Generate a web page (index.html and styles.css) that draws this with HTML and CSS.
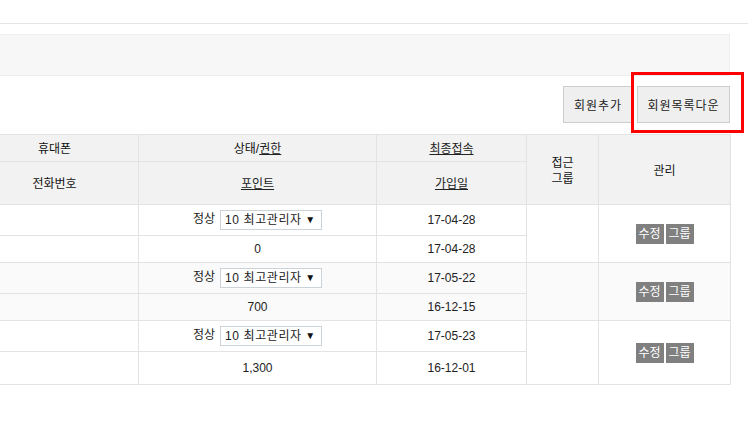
FILE: index.html
```html
<!DOCTYPE html>
<html lang="ko">
<head>
    <meta charset="UTF-8">
    <title>회원관리</title>
    <link rel="stylesheet" href="styles.css">
</head>
<body>
    <div class="top-bar"></div>
    <div class="container">
        <div class="search-box"></div>

        <div class="btn-row">
            <a href="#" class="btn btn-add">회원추가</a>
            <a href="#" class="btn btn-down">회원목록다운</a>
        </div>

        <table class="member-table">
            <colgroup>
                <col class="c1"><col class="c2"><col class="c3"><col class="c4"><col class="c5">
            </colgroup>
            <thead>
                <tr class="h1">
                    <th>휴대폰</th>
                    <th>상태/<a href="#">권한</a></th>
                    <th><a href="#">최종접속</a></th>
                    <th rowspan="2">접근<br>그룹</th>
                    <th rowspan="2">관리</th>
                </tr>
                <tr class="h2">
                    <th>전화번호</th>
                    <th><a href="#">포인트</a></th>
                    <th><a href="#">가입일</a></th>
                </tr>
            </thead>
            <tbody>
                <tr class="r1">
                    <td></td>
                    <td class="level">정상<span class="select">10 최고관리자<span class="arrow">▼</span></span></td>
                    <td>17-04-28</td>
                    <td rowspan="2"></td>
                    <td rowspan="2"><div class="manage"><span class="mini-btn">수정</span><span class="mini-btn">그룹</span></div></td>
                </tr>
                <tr class="r2">
                    <td></td>
                    <td>0</td>
                    <td>17-04-28</td>
                </tr>
                <tr class="r1 alt">
                    <td></td>
                    <td class="level">정상<span class="select">10 최고관리자<span class="arrow">▼</span></span></td>
                    <td>17-05-22</td>
                    <td rowspan="2"></td>
                    <td rowspan="2"><div class="manage"><span class="mini-btn">수정</span><span class="mini-btn">그룹</span></div></td>
                </tr>
                <tr class="r2 alt">
                    <td></td>
                    <td>700</td>
                    <td>16-12-15</td>
                </tr>
                <tr class="r1">
                    <td></td>
                    <td class="level">정상<span class="select">10 최고관리자<span class="arrow">▼</span></span></td>
                    <td>17-05-23</td>
                    <td rowspan="2"></td>
                    <td rowspan="2"><div class="manage"><span class="mini-btn">수정</span><span class="mini-btn">그룹</span></div></td>
                </tr>
                <tr class="r2 last">
                    <td></td>
                    <td>1,300</td>
                    <td>16-12-01</td>
                </tr>
            </tbody>
        </table>
    </div>
</body>
</html>
```

FILE: styles.css
```css
/* General */
body {
    margin: 0;
    font-family: "Liberation Sans", "Noto Sans CJK KR", sans-serif;
    font-size: 12px;
    color: #222;
    background: #fff;
    overflow: hidden;
}

a {
    color: #222;
}

.top-bar {
    height: 23px;
    border-bottom: 1px solid #e5e5e5;
}

.container {
    width: 760px;
    margin-left: -30px;
}

.search-box {
    margin-top: 10px;
    height: 40px;
    background: #f7f7f7;
    border: 1px solid #eee;
}

/* Buttons */
.btn-row {
    display: flex;
    justify-content: flex-end;
    gap: 4px;
    margin-top: 10px;
    height: 37px;
}

.btn {
    display: flex;
    align-items: center;
    justify-content: center;
    box-sizing: border-box;
    background: #efefef;
    border: 1px solid #ccc;
    color: #222;
    text-decoration: none;
    letter-spacing: 1px;
    position: relative;
}

.btn-add { width: 70px; }
.btn-down { width: 93px; }

.btn-down::after {
    content: "";
    position: absolute;
    left: -7px;
    top: -15px;
    right: -15px;
    bottom: -11px;
    border: 3px solid #f00;
}

/* Table */
.member-table {
    margin-top: 11px;
    width: 100%;
    border-collapse: collapse;
    table-layout: fixed;
}

.c1 { width: 168px; }
.c2 { width: 238px; }
.c3 { width: 150px; }
.c4 { width: 72px; }
.c5 { width: 132px; }

.member-table th,
.member-table td {
    border: 1px solid #e3e3e3;
    padding: 0;
    text-align: center;
    line-height: 16px;
}

.member-table th {
    background: #f2f2f2;
    font-weight: normal;
    color: #111;
    padding-top: 2px;
}

.h1 th { height: 24px; }
.h2 th { height: 40px; }

.r1 td { height: 30px; }
.r2 td { height: 26px; }
.last td { height: 32px; }

.alt td { background: #fafafa; }

.select {
    display: inline-block;
    box-sizing: border-box;
    width: 102px;
    height: 20px;
    line-height: 18px;
    padding-left: 4px;
    margin-left: 5px;
    border: 1px solid #ccd3d8;
    background: #fff;
    text-align: left;
    vertical-align: middle;
    position: relative;
    letter-spacing: 0.6px;
}

.arrow {
    position: absolute;
    right: 6px;
    top: 0;
    font-size: 10px;
    letter-spacing: 0;
    color: #111;
}

.manage {
    display: flex;
    justify-content: center;
    gap: 2px;
}

.mini-btn {
    display: block;
    width: 28px;
    height: 20px;
    line-height: 20px;
    background: #808080;
    color: #fff;
}
```
